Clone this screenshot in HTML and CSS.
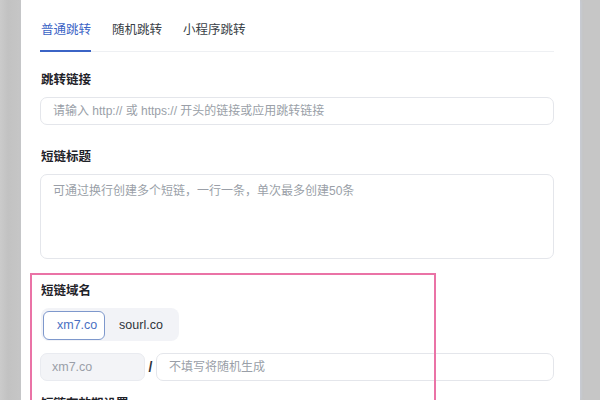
FILE: index.html
```html
<!DOCTYPE html>
<html lang="zh">
<head>
<meta charset="utf-8">
<link rel="stylesheet" href="styles.css">
</head>
<body>
<div class="page">
  <div class="card">
    <div class="tabs">
      <div class="tab active">普通跳转</div>
      <div class="tab">随机跳转</div>
      <div class="tab">小程序跳转</div>
    </div>

    <div class="field">
      <div class="label">跳转链接</div>
      <div class="input"><span class="ph">请输入 http:// 或 https:// 开头的链接或应用跳转链接</span></div>
    </div>

    <div class="field">
      <div class="label">短链标题</div>
      <div class="textarea"><span class="ph">可通过换行创建多个短链，一行一条，单次最多创建50条</span></div>
    </div>

    <div class="field domain">
      <div class="label">短链域名</div>
      <div class="segment">
        <div class="seg active">xm7.co</div>
        <div class="seg">sourl.co</div>
      </div>
      <div class="path-row">
        <div class="prefix">xm7.co</div>
        <div class="slash">/</div>
        <div class="input grow"><span class="ph">不填写将随机生成</span></div>
      </div>
    </div>

    <div class="field">
      <div class="label">短链有效期设置</div>
    </div>

    <div class="highlight"></div>
  </div>
</div>
</body>
</html>
```

FILE: styles.css
```css
html, body {
  margin: 0;
  padding: 0;
  height: 100%;
  overflow: hidden;
}
body {
  background: linear-gradient(to right, #cbcbcb 0, #c2c2c2 8px, #c6c6c6 20px);
  font-family: "Liberation Sans", "Noto Sans CJK SC", sans-serif;
  color: #1f2329;
}
.page {
  display: flex;
  height: 100%;
  padding-left: 21px;
  width: 559px;
}
.card {
  position: relative;
  flex: 1;
  background: #fff;
  padding: 20px 26px 0 19px;
  box-shadow: 1px 0 3px rgba(200, 210, 230, 0.6);
}
.tabs {
  display: flex;
  gap: 20px;
  border-bottom: 1px solid #eef0f3;
}
.tab {
  font-size: 12.5px;
  line-height: 20px;
  padding: 0 0 10px 1px;
  color: #3a3f47;
  border-bottom: 2px solid transparent;
  margin-bottom: -1px;
}
.tab.active {
  color: #3b64c6;
  border-bottom-color: #3b64c6;
}
.field {
  margin-top: 18px;
}
.field + .field {
  margin-top: 22px;
}
.field.domain {
  margin-top: 22px;
}
.field.domain + .field {
  margin-top: 13px;
}
.label {
  font-size: 12.5px;
  font-weight: bold;
  line-height: 20px;
  padding-left: 1px;
  margin-bottom: 7px;
  color: #1f2329;
}
.input {
  height: 26px;
  border: 1px solid #e4e6eb;
  border-radius: 7px;
  padding: 0 12px;
  display: flex;
  align-items: center;
  background: #fff;
}
.textarea {
  height: 71px;
  border: 1px solid #e4e6eb;
  border-radius: 7px;
  padding: 6px 12px;
}
.ph {
  font-size: 12px;
  line-height: 14px;
  color: #9a9fa8;
}
.segment {
  display: inline-flex;
  background: #f2f3f7;
  border-radius: 8px;
  padding: 3px 2px 1px 2px;
  margin-left: 1px;
}
.seg {
  font-size: 12.5px;
  height: 27px;
  line-height: 27px;
  padding: 0 13px;
  color: #2f343b;
  border: 1px solid transparent;
  border-radius: 6px;
  width: 45px;
  text-align: center;
}
.seg + .seg {
  width: 44px;
}
.seg.active {
  background: #fff;
  border-color: #7e98cc;
  color: #4a6fc2;
  width: 34px;
}
.path-row {
  display: flex;
  align-items: center;
  margin-top: 12px;
}
.prefix {
  width: 92px;
  height: 26px;
  line-height: 26px;
  padding-left: 11px;
  border: 1px solid #e9ebf0;
  border-radius: 7px;
  background: #f3f4f7;
  color: #9a9fa8;
  font-size: 12.5px;
}
.slash {
  width: 11px;
  text-align: center;
  font-weight: bold;
  font-size: 14px;
  color: #2f343b;
}
.grow {
  flex: 1;
}
.highlight {
  position: absolute;
  left: 9px;
  top: 273px;
  width: 402px;
  height: 200px;
  border: 2px solid #ea73a6;
  pointer-events: none;
}
```
